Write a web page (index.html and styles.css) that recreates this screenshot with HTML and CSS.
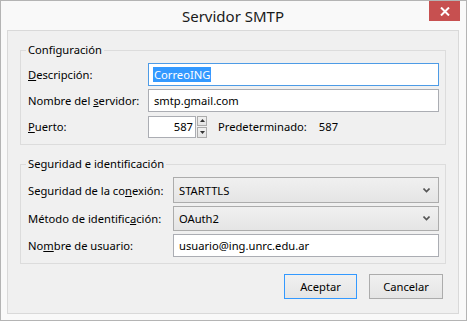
FILE: index.html
```html
<!DOCTYPE html>
<html lang="es">
<head>
<meta charset="utf-8">
<title>Servidor SMTP</title>
<link rel="stylesheet" href="styles.css">
</head>
<body>
<div class="window">
  <div class="titlebar">
    <span></span>
    <span class="title">Servidor SMTP</span>
    <span class="close"><svg width="10" height="9" viewBox="0 0 10 9"><path d="M1 0.5 L9 8.5 M9 0.5 L1 8.5" stroke="#fff" stroke-width="2"/></svg></span>
  </div>
  <div class="client">
    <fieldset class="group g1">
      <legend>Configuración</legend>
      <label><u>D</u>escripción:</label>
      <div class="field focused"><span class="sel">CorreoING</span></div>
      <label>Nombre del <u>s</u>ervidor:</label>
      <div class="field">smtp.gmail.com</div>
      <label><u>P</u>uerto:</label>
      <div class="port-row">
        <div class="field port">587</div>
        <div class="spin">
          <span class="spin-btn"><svg width="5" height="3" viewBox="0 0 5 3"><path d="M2.5 0 L5 3 L0 3 Z" fill="#333"/></svg></span>
          <span class="spin-btn"><svg width="5" height="3" viewBox="0 0 5 3"><path d="M0 0 L5 0 L2.5 3 Z" fill="#333"/></svg></span>
        </div>
        <span class="default">Predeterminado:</span>
        <span class="default-val">587</span>
      </div>
    </fieldset>
    <fieldset class="group g2">
      <legend>Seguridad e identificación</legend>
      <label>Seguridad de la co<u>n</u>exión:</label>
      <div class="select"><span>STARTTLS</span><svg width="7" height="5" viewBox="0 0 7 5"><path d="M0.5 0.5 L3.5 3.5 L6.5 0.5" stroke="#555" stroke-width="1.6" fill="none"/></svg></div>
      <label>Método de identific<u>a</u>ción:</label>
      <div class="select"><span>OAuth2</span><svg width="7" height="5" viewBox="0 0 7 5"><path d="M0.5 0.5 L3.5 3.5 L6.5 0.5" stroke="#555" stroke-width="1.6" fill="none"/></svg></div>
      <label>No<u>m</u>bre de usuario:</label>
      <div class="field">usuario@ing.unrc.edu.ar</div>
    </fieldset>
    <div class="buttons">
      <button class="btn default-btn">Aceptar</button>
      <button class="btn">Cancelar</button>
    </div>
  </div>
</div>
</body>
</html>
```
FILE: styles.css
```css
* { box-sizing: border-box; }
html, body { margin: 0; padding: 0; }
body {
  font-family: "Noto Sans", "Open Sans", sans-serif;
  font-size: 11.2px;
  color: #000;
  background: #f8f8f8;
}
.window {
  width: 467px;
  height: 321px;
  border: 1px solid #b4b4b4;
  background: #f9f9f9;
  display: flex;
  flex-direction: column;
  padding: 0 7px 6px 6px;
}
.titlebar {
  height: 29px;
  display: grid;
  grid-template-columns: 1fr auto 1fr;
  align-items: start;
}
.title {
  font-size: 15px;
  line-height: 20px;
  margin-top: 5px;
  color: #1a1a1a;
}
.close {
  justify-self: end;
  margin-right: -1px;
  width: 31px;
  height: 20px;
  background: #c75050;
  display: flex;
  align-items: center;
  justify-content: center;
}
.client {
  flex: 1;
  border: 1px solid #d9d9d9;
  background: #f0f0f0;
  padding: 11px 12px 0 12px;
  display: flex;
  flex-direction: column;
}
.group {
  margin: 0;
  border: 1px solid #dcdcdc;
  display: grid;
  align-items: center;
  min-inline-size: 0;
}
.group legend {
  padding: 0 2px;
  margin-left: -2px;
  line-height: 16px;
}
.g1 {
  grid-template-columns: 120px 1fr;
  grid-template-rows: 23px 23px 22px;
  row-gap: 3px;
  padding: 5px 6px 7px 7px;
}
.g1 .port-row { margin-top: 1px; }
.g2 {
  margin-top: 11px;
  grid-template-columns: 145px 1fr;
  grid-template-rows: 26px 25px 23px;
  row-gap: 3px;
  padding: 5px 6px 6px 7px;
}
label { white-space: nowrap; }
.field {
  height: 100%;
  background: #fff;
  border: 1px solid #abadb3;
  padding-left: 5px;
  display: flex;
  align-items: center;
  white-space: nowrap;
}
.field.focused { border-color: #4d9be6; padding-left: 4px; }
.sel {
  background: #3399ff;
  color: #fff;
  line-height: 15px;
  padding: 0 1px;
}
.port-row {
  display: flex;
  align-items: center;
  height: 22px;
}
.field.port {
  width: 48px;
  justify-content: flex-end;
  padding-right: 2px;
  padding-left: 0;
}
.spin {
  display: flex;
  flex-direction: column;
  gap: 1px;
  margin-left: 1px;
  height: 22px;
}
.spin-btn {
  width: 10px;
  height: 10.5px;
  border: 1px solid #acacac;
  background: linear-gradient(#f0f0f0, #e5e5e5);
  display: flex;
  align-items: center;
  justify-content: center;
}
.default { margin-left: 11px; }
.default-val { margin-left: 12px; }
.select {
  height: 100%;
  border: 1px solid #acacac;
  background: linear-gradient(#f0f0f0, #e5e5e5);
  padding: 0 8px 0 5px;
  display: flex;
  align-items: center;
  justify-content: space-between;
}
.buttons {
  display: flex;
  justify-content: flex-end;
  gap: 12px;
  margin-top: 10px;
  margin-right: 3px;
}
.btn {
  font: inherit;
  color: #000;
  height: 25px;
  border: 1px solid #acacac;
  background: linear-gradient(#f0f0f0, #e5e5e5);
  padding: 0;
  width: 74px;
}
.default-btn { border-color: #3399ff; width: 73px; }
```
